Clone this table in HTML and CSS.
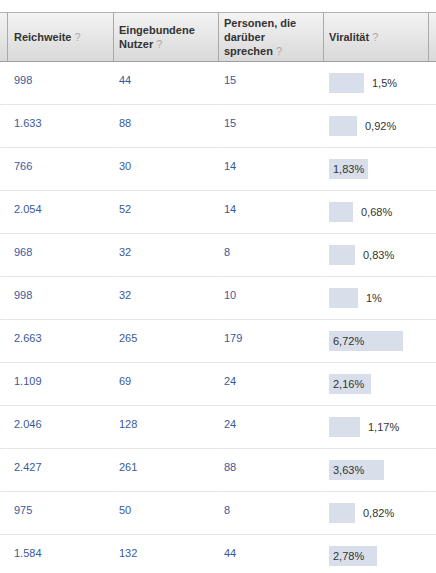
FILE: index.html
```html
<!DOCTYPE html>
<html lang="de">
<head>
<meta charset="utf-8">
<title>Insights</title>
<link rel="stylesheet" href="styles.css">
</head>
<body>
<table class="stats">
  <colgroup>
    <col class="c0"><col class="c1"><col class="c2"><col class="c3"><col class="c4"><col class="c5">
  </colgroup>
  <thead>
    <tr>
      <th class="edge"></th>
      <th class="first">Reichweite <span class="q">?</span></th>
      <th>Eingebundene<br>Nutzer <span class="q">?</span></th>
      <th>Personen, die<br>darüber<br>sprechen <span class="q">?</span></th>
      <th>Viralität <span class="q">?</span></th>
      <th class="last"></th>
    </tr>
  </thead>
  <tbody>
    <tr><td class="edge"></td><td class="first num">998</td><td class="num">44</td><td class="num">15</td><td><div class="viral"><div class="bar" style="width:35px"></div><span class="pct out">1,5%</span></div></td><td class="last"></td></tr>
    <tr><td class="edge"></td><td class="first num">1.633</td><td class="num">88</td><td class="num">15</td><td><div class="viral"><div class="bar" style="width:28px"></div><span class="pct out">0,92%</span></div></td><td class="last"></td></tr>
    <tr><td class="edge"></td><td class="first num">766</td><td class="num">30</td><td class="num">14</td><td><div class="viral"><div class="bar" style="width:39px"><span class="pct in">1,83%</span></div></div></td><td class="last"></td></tr>
    <tr><td class="edge"></td><td class="first num">2.054</td><td class="num">52</td><td class="num">14</td><td><div class="viral"><div class="bar" style="width:24px"></div><span class="pct out">0,68%</span></div></td><td class="last"></td></tr>
    <tr><td class="edge"></td><td class="first num">968</td><td class="num">32</td><td class="num">8</td><td><div class="viral"><div class="bar" style="width:26px"></div><span class="pct out">0,83%</span></div></td><td class="last"></td></tr>
    <tr><td class="edge"></td><td class="first num">998</td><td class="num">32</td><td class="num">10</td><td><div class="viral"><div class="bar" style="width:29px"></div><span class="pct out">1%</span></div></td><td class="last"></td></tr>
    <tr><td class="edge"></td><td class="first num">2.663</td><td class="num">265</td><td class="num">179</td><td><div class="viral"><div class="bar" style="width:74px"><span class="pct in">6,72%</span></div></div></td><td class="last"></td></tr>
    <tr><td class="edge"></td><td class="first num">1.109</td><td class="num">69</td><td class="num">24</td><td><div class="viral"><div class="bar" style="width:42px"><span class="pct in">2,16%</span></div></div></td><td class="last"></td></tr>
    <tr><td class="edge"></td><td class="first num">2.046</td><td class="num">128</td><td class="num">24</td><td><div class="viral"><div class="bar" style="width:31px"></div><span class="pct out">1,17%</span></div></td><td class="last"></td></tr>
    <tr><td class="edge"></td><td class="first num">2.427</td><td class="num">261</td><td class="num">88</td><td><div class="viral"><div class="bar" style="width:55px"><span class="pct in">3,63%</span></div></div></td><td class="last"></td></tr>
    <tr><td class="edge"></td><td class="first num">975</td><td class="num">50</td><td class="num">8</td><td><div class="viral"><div class="bar" style="width:26px"></div><span class="pct out">0,82%</span></div></td><td class="last"></td></tr>
    <tr><td class="edge"></td><td class="first num">1.584</td><td class="num">132</td><td class="num">44</td><td><div class="viral"><div class="bar" style="width:48px"><span class="pct in">2,78%</span></div></div></td><td class="last"></td></tr>
  </tbody>
</table>
</body>
</html>
```
FILE: styles.css
```css
html, body {
  margin: 0;
  padding: 0;
  background: #fff;
  overflow: hidden;
}
body {
  font-family: "Liberation Sans", Arial, sans-serif;
  font-size: 11px;
  color: #333;
}
.stats {
  margin-top: 12px;
  border-collapse: separate;
  border-spacing: 0;
  table-layout: fixed;
  width: 436px;
}
.c0 { width: 7px; }
.c1 { width: 106px; }
.c2 { width: 105px; }
.c3 { width: 105px; }
.c4 { width: 105px; }
.c5 { width: 8px; }

.stats th {
  height: 48px;
  padding: 0 4px 0 5px;
  text-align: left;
  vertical-align: middle;
  font-weight: bold;
  line-height: 14px;
  color: #333;
  background: linear-gradient(#f3f3f3, #d9d9d9);
  border-top: 1px solid #b3b3b3;
  border-bottom: 1px solid #9f9f9f;
  border-left: 1px solid #a9a9a9;
}
.stats th.edge {
  border-left: none;
  padding: 0;
}
.stats th.first { padding-left: 6px; }
.stats th.last { padding: 0; }
.q {
  color: #aaa;
  font-weight: normal;
}

.stats td {
  padding: 11px 4px 11px 5px;
  vertical-align: top;
  line-height: 14px;
  border-bottom: 1px solid #e6e6e6;
  border-left: 1px solid #fff;
}
.stats td.edge { border-left: none; padding: 0; }
.stats td.first { padding-left: 6px; }
.stats td.last { padding: 0; }
.num { color: #3b5998; }

.viral {
  display: flex;
  align-items: center;
  height: 20px;
}
.bar {
  flex: none;
  height: 20px;
  background: #d8dfea;
  display: flex;
  align-items: center;
  white-space: nowrap;
}
.pct {
  color: #333;
  white-space: nowrap;
}
.pct.out { margin-left: 8px; }
.pct.in { padding-left: 4px; }
```
